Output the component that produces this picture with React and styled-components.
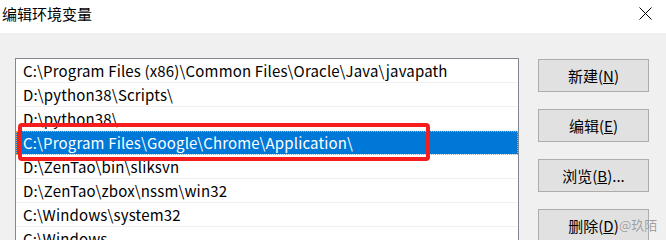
import React from "react";
import styled, { createGlobalStyle } from "styled-components";

const GlobalStyle = createGlobalStyle`
  html, body { margin: 0; padding: 0; }
  body {
    background: #f0f0f0;
    font-family: "Noto Sans CJK SC", "Noto Sans", sans-serif;
    color: #000;
  }
`;

const Window = styled.div`
  width: 666px;
  height: 240px;
  overflow: hidden;
  display: flex;
  flex-direction: column;
  background: #f0f0f0;
  position: relative;
`;

const TitleBar = styled.div`
  height: 33px;
  flex: none;
  background: #fff;
  display: flex;
  justify-content: space-between;
  align-items: flex-start;
`;

const Title = styled.div`
  font-size: 15px;
  line-height: 20px;
  padding: 4px 0 0 2px;
`;

const Close = styled.div`
  width: 13px;
  height: 13px;
  margin: 7px 14px 0 0;
  display: flex;
`;

const Content = styled.div`
  display: flex;
  align-items: flex-start;
  gap: 19px;
  padding: 25px 0 0 15px;
`;

const ListBox = styled.div`
  position: relative;
  width: 502px;
  height: 300px;
  border: 1px solid #828790;
  background: #fff;
  flex: none;
`;

const Row = styled.div`
  height: 24px;
  box-sizing: border-box;
  border-bottom: 1px solid #f0f0f0;
  padding-left: 7px;
  font-size: 15px;
  line-height: 23px;
  letter-spacing: 0.16px;
  white-space: nowrap;
  color: ${(p) => (p.$selected ? "#fff" : "#000")};
  background: ${(p) => (p.$selected ? "#0078d7" : "transparent")};
  outline: ${(p) => (p.$selected ? "1px dotted #f3a54a" : "none")};
  outline-offset: -1px;
`;

const Highlight = styled.div`
  position: absolute;
  left: 2px;
  top: 64px;
  width: 412px;
  height: 38px;
  box-sizing: border-box;
  border: 4px solid #f51d1d;
  border-radius: 4px;
  pointer-events: none;
`;

const Buttons = styled.div`
  display: flex;
  flex-direction: column;
  gap: 17px;
  padding-top: 1px;
`;

const Button = styled.div`
  width: 111px;
  height: 33px;
  box-sizing: border-box;
  background: #e1e1e1;
  border: 1px solid #adadad;
  display: flex;
  align-items: center;
  justify-content: center;
  font-size: 15px;
  color: #000;
`;

const Watermark = styled.div`
  position: absolute;
  left: 619px;
  top: 217px;
  font-size: 13px;
  line-height: 16px;
  color: rgba(120, 120, 120, 0.7);
  text-shadow: 0 0 1px rgba(255, 255, 255, 0.6);
  pointer-events: none;
`;

const rows = [
  "C:\\Program Files (x86)\\Common Files\\Oracle\\Java\\javapath",
  "D:\\python38\\Scripts\\",
  "D:\\python38\\",
  "C:\\Program Files\\Google\\Chrome\\Application\\",
  "D:\\ZenTao\\bin\\sliksvn",
  "D:\\ZenTao\\zbox\\nssm\\win32",
  "C:\\Windows\\system32",
  "C:\\Windows",
  "C:\\Windows\\System32\\Wbem",
];

export default function App() {
  return (
    <>
      <GlobalStyle />
      <Window>
        <TitleBar>
          <Title>编辑环境变量</Title>
          <Close>
            <svg width="13" height="13" viewBox="0 0 13 13">
              <path d="M0.5 0.5 L12.5 12.5 M12.5 0.5 L0.5 12.5" stroke="#000" strokeWidth="1" />
            </svg>
          </Close>
        </TitleBar>
        <Content>
          <ListBox>
            {rows.map((r, i) => (
              <Row key={i} $selected={i === 3}>
                {r}
              </Row>
            ))}
            <Highlight />
          </ListBox>
          <Buttons>
            <Button>新建(<u>N</u>)</Button>
            <Button>编辑(<u>E</u>)</Button>
            <Button>浏览(<u>B</u>)...</Button>
            <Button>删除(<u>D</u>)</Button>
          </Buttons>
        </Content>
        <Watermark>@玖陌</Watermark>
      </Window>
    </>
  );
}
